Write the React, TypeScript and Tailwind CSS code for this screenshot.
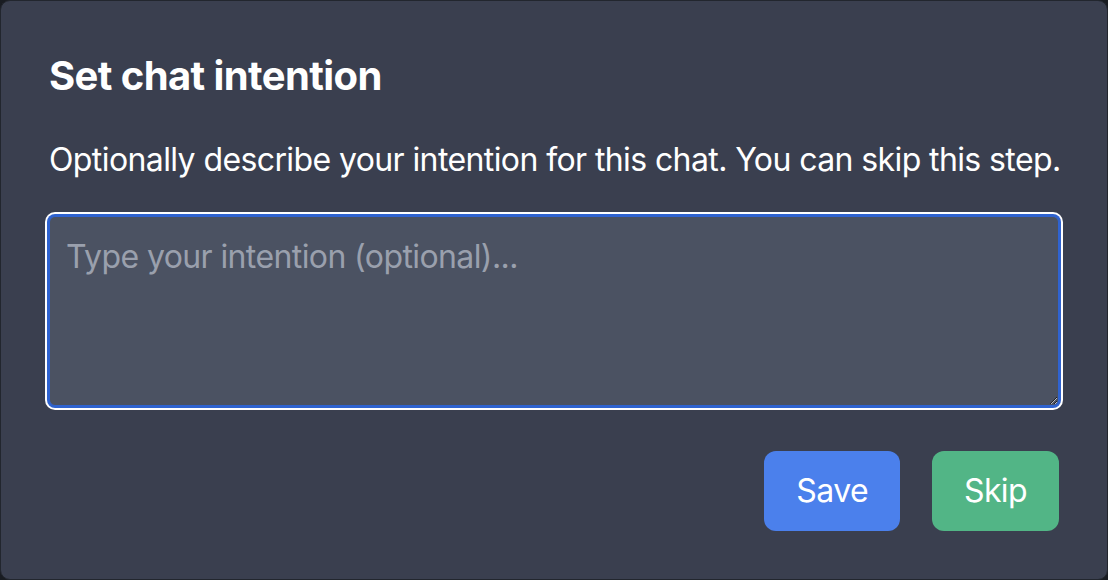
import React from 'react';

export default function App() {
  return (
    <div
      className="w-[1108px] h-[580px] bg-[#191c22]"
      style={{ fontFamily: 'Inter, "Noto Sans", sans-serif' }}
    >
      <div className="flex flex-col h-full rounded-[10px] border border-[#22262e] bg-[#3a3f4f] px-12 pt-[47px] pb-12 tracking-[-0.6px]">
        <h2 className="text-[40px] leading-[56px] font-bold text-white mb-8">Set chat intention</h2>
        <p className="text-[32px] leading-[48px] text-white mb-8 whitespace-nowrap">
          Optionally describe your intention for this chat. You can skip this step.
        </p>
        <textarea
          placeholder="Type your intention (optional)..."
          className="block w-full h-[192px] resize-y rounded-[6px] border border-[#2f63d0] bg-[#4b5262] px-4 py-4 text-[32px] leading-[48px] tracking-[-0.6px] text-white placeholder:text-[#9aa0ad] outline-none shadow-[0_0_0_2px_#2f63d0,0_0_0_4px_#ffffff]"
        />
        <div className="flex justify-end gap-8 mt-[45px]">
          <button className="h-20 rounded-xl bg-[#4b80ec] px-8 text-[32px] text-white">Save</button>
          <button className="h-20 rounded-xl bg-[#52b586] px-8 text-[32px] text-white">Skip</button>
        </div>
      </div>
    </div>
  );
}
